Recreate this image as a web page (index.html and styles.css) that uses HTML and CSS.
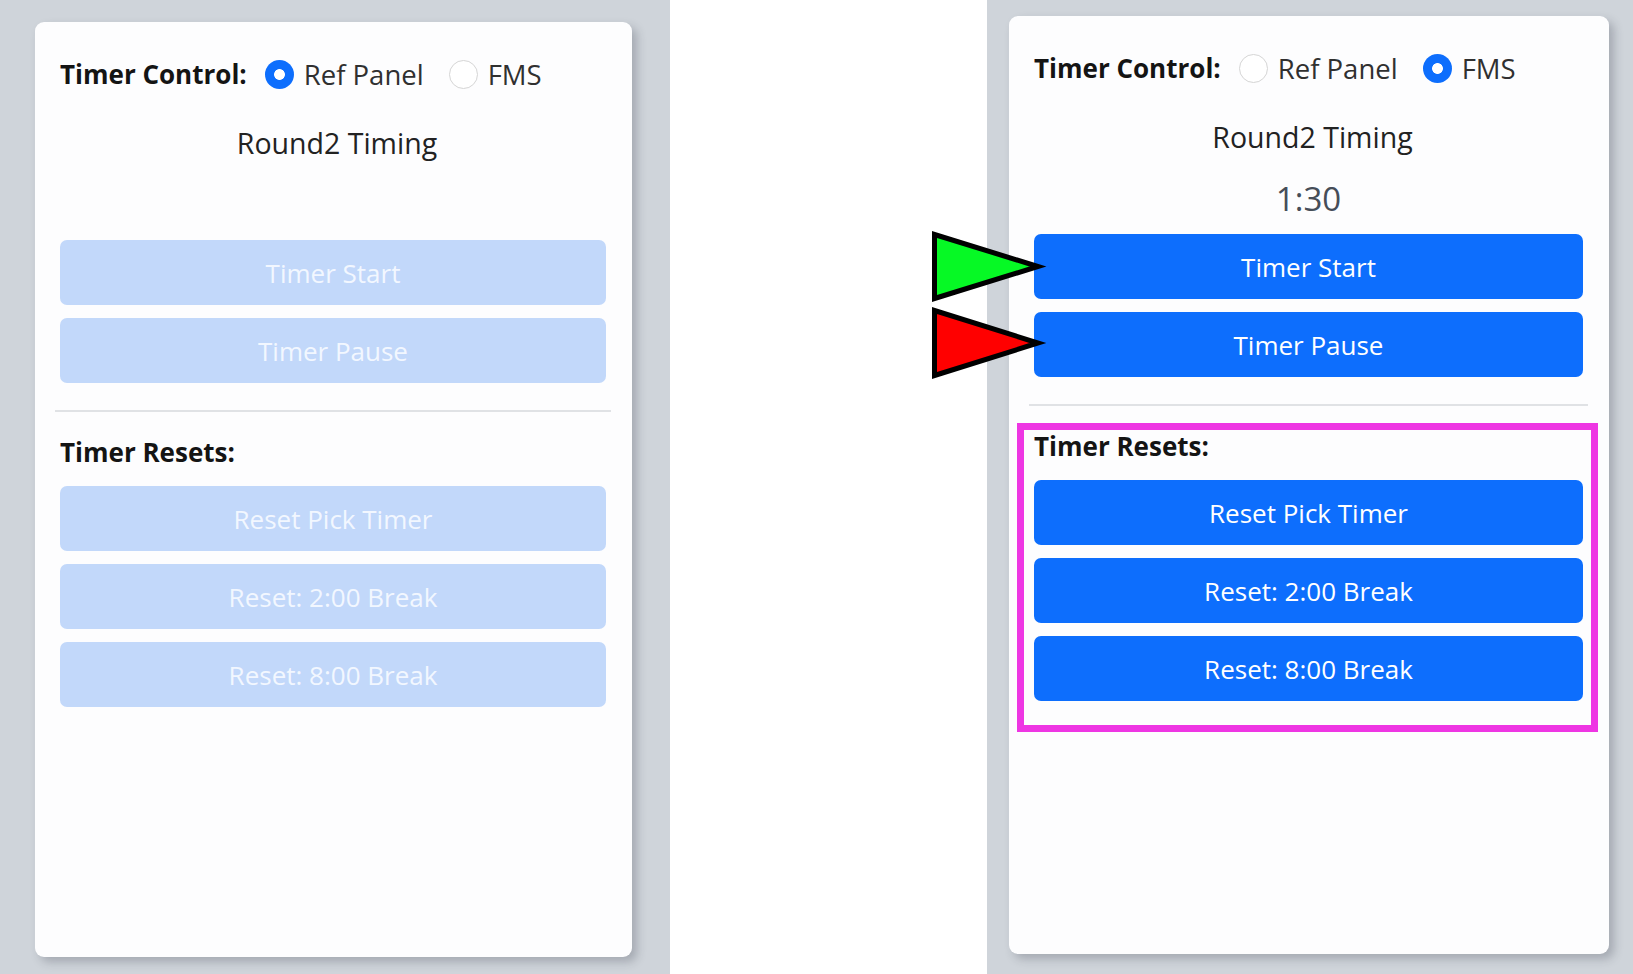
FILE: index.html
```html
<!DOCTYPE html>
<html lang="en">
<head>
<meta charset="utf-8">
<title>Timer Control</title>
<link rel="stylesheet" href="styles.css">
</head>
<body>
<div class="screen">
  <section class="pane pane-left">
    <div class="card card-left">
      <div class="control-row">
        <span class="control-label">Timer Control:</span>
        <label class="radio"><span class="radio-dot checked"></span><span>Ref Panel</span></label>
        <label class="radio"><span class="radio-dot"></span><span>FMS</span></label>
      </div>
      <div class="round-title">Round2 Timing</div>
      <div class="clock"></div>
      <div class="btn-stack">
        <button class="btn disabled">Timer Start</button>
        <button class="btn disabled">Timer Pause</button>
      </div>
      <hr class="divider">
      <div class="resets">
        <div class="section-label">Timer Resets:</div>
        <div class="btn-stack">
          <button class="btn disabled">Reset Pick Timer</button>
          <button class="btn disabled">Reset: 2:00 Break</button>
          <button class="btn disabled">Reset: 8:00 Break</button>
        </div>
      </div>
    </div>
  </section>

  <div class="spacer">
    <svg class="arrows" width="130" height="160" viewBox="0 0 130 160">
      <polygon points="6.5,9.5 6.5,73.5 110,41.5" fill="#06f925" stroke="#000" stroke-width="5" stroke-linejoin="miter"/>
      <polygon points="6.5,85.5 6.5,150.5 110,118" fill="#ff0000" stroke="#000" stroke-width="5" stroke-linejoin="miter"/>
    </svg>
  </div>

  <section class="pane pane-right">
    <div class="card card-right">
      <div class="control-row">
        <span class="control-label">Timer Control:</span>
        <label class="radio"><span class="radio-dot"></span><span>Ref Panel</span></label>
        <label class="radio"><span class="radio-dot checked"></span><span>FMS</span></label>
      </div>
      <div class="round-title">Round2 Timing</div>
      <div class="clock">1:30</div>
      <div class="btn-stack">
        <button class="btn">Timer Start</button>
        <button class="btn">Timer Pause</button>
      </div>
      <hr class="divider">
      <div class="resets highlight">
        <div class="section-label">Timer Resets:</div>
        <div class="btn-stack">
          <button class="btn">Reset Pick Timer</button>
          <button class="btn">Reset: 2:00 Break</button>
          <button class="btn">Reset: 8:00 Break</button>
        </div>
      </div>
    </div>
  </section>
</div>
</body>
</html>
```

FILE: styles.css
```css
* { box-sizing: border-box; }
html, body { margin: 0; padding: 0; }
body {
  width: 1633px;
  height: 974px;
  overflow: hidden;
  background: #ffffff;
  font-family: "Open Sans", "Noto Sans", sans-serif;
}
.screen { display: flex; height: 974px; }
.pane { background: #cfd4da; }
.pane-left { width: 670px; padding: 22px 0 0 35px; }
.spacer { width: 317px; position: relative; z-index: 2; background: #ffffff; }
.pane-right { flex: 1; padding: 16px 0 0 22px; }

.card {
  background: #fdfdfe;
  border-radius: 9px;
  box-shadow: 5px 5px 10px rgba(40, 45, 60, 0.25);
  padding: 31px 26px 0 25px;
  display: flex;
  flex-direction: column;
}
.card-left { width: 597px; height: 935px; }
.card-right { width: 600px; height: 938px; }

.control-row { display: flex; align-items: center; height: 42px; }
.control-label {
  font-weight: 700;
  font-size: 26px;
  color: #141414;
  margin-right: 18px;
}
.radio {
  display: flex;
  align-items: center;
  gap: 10px;
  font-size: 27.5px;
  color: #303030;
  margin-right: 25px;
}
.radio-dot {
  width: 29px;
  height: 29px;
  border-radius: 50%;
  border: 1.5px solid #d5d5d5;
  background: #ffffff;
  flex: none;
}
.radio-dot.checked {
  border: none;
  background: radial-gradient(circle, #ffffff 0 5px, #0d6efd 5.8px);
}

.round-title {
  margin-top: 30px;
  padding-left: 8px;
  text-align: center;
  font-size: 28.5px;
  line-height: 37px;
  color: #222222;
}
.clock {
  margin-top: 22px;
  height: 42px;
  text-align: center;
  font-size: 33px;
  line-height: 42px;
  color: #464d58;
}

.btn-stack { display: flex; flex-direction: column; gap: 13px; }
.card > .btn-stack { margin-top: 14px; }
.btn {
  height: 65px;
  border: none;
  border-radius: 7px;
  font-family: inherit;
  font-size: 26px;
  background: #0d6efd;
  color: #ffffff;
  padding: 0;
}
.btn.disabled { background: #c2d8fa; color: #f2f7ff; }

.divider {
  margin: 27px -5px 0;
  border: 0;
  height: 2px;
  background: #e0e2e5;
}

.resets { position: relative; margin-top: 19px; }
.section-label {
  font-weight: 700;
  font-size: 26px;
  line-height: 42px;
  color: #141414;
}
.resets .btn-stack { margin-top: 13px; }
.resets.highlight::after {
  content: "";
  position: absolute;
  left: -17px;
  right: -15px;
  top: -2px;
  bottom: -31px;
  border: 7px solid #ee36e3;
  pointer-events: none;
}

.arrows { position: absolute; left: 258px; top: 225px; overflow: visible; }
```
